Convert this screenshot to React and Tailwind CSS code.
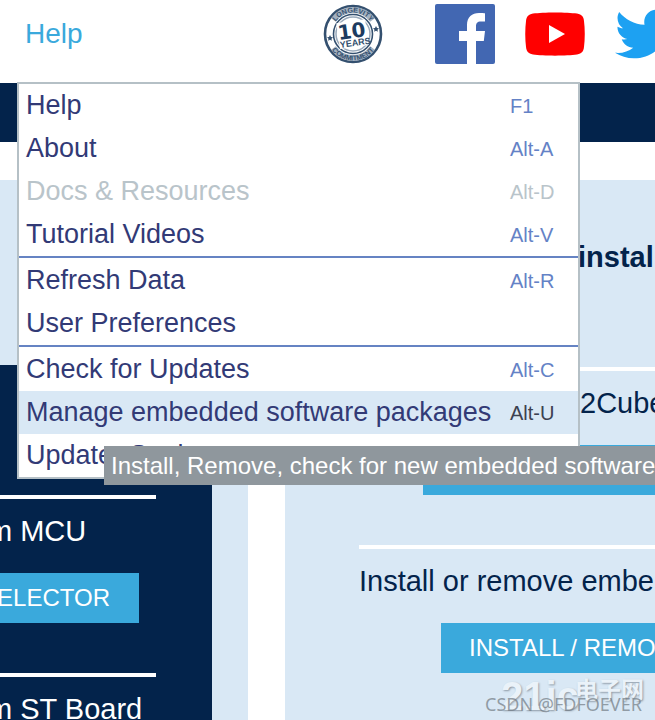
import React from "react";
import { FaTwitter } from "react-icons/fa";

const menuGroups = [
  [
    { label: "Help", shortcut: "F1" },
    { label: "About", shortcut: "Alt-A" },
    { label: "Docs & Resources", shortcut: "Alt-D", disabled: true },
    { label: "Tutorial Videos", shortcut: "Alt-V" },
  ],
  [
    { label: "Refresh Data", shortcut: "Alt-R" },
    { label: "User Preferences" },
  ],
  [
    { label: "Check for Updates", shortcut: "Alt-C" },
    { label: "Manage embedded software packages", shortcut: "Alt-U", active: true },
    { label: "Updater Settings" },
  ],
];

const itemColor = (item) => (item.disabled ? "text-[#b9c4ca]" : "text-[#323a76]");

const shortcutColor = (item) => {
  if (item.disabled) return "text-[#b9c4ca]";
  return item.active ? "text-[#3c4150]" : "text-[#6482c6]";
};

const LongevityBadge = () => (
  <svg className="w-[60px] h-[60px]" viewBox="0 0 60 60" aria-label="10 years longevity commitment">
    <defs>
      <path id="badge-top" d="M 8.500 30 A 21.500 21.500 0 0 1 51.500 30" />
      <path id="badge-bottom" d="M 3.500 30 A 26.500 26.500 0 0 0 56.500 30" />
    </defs>
    <g fill="none" stroke="#34506f">
      <circle cx="30" cy="30" r="28" strokeWidth="2.600" />
      <path d="M10.500 16A24 24 0 0 1 49.500 16M10.500 44A24 24 0 0 0 49.500 44" stroke="#a3b1c0" strokeWidth="6" />
      <circle cx="30" cy="30" r="19.500" strokeWidth="1.600" />
      <circle cx="30" cy="30" r="17" stroke="#9aaabb" strokeWidth="1.500" />
    </g>
    <g fill="#34506f" fontFamily="Liberation Sans, sans-serif" fontWeight="bold" textAnchor="middle">
      <text fontSize="7">
        <textPath href="#badge-top" startOffset="50%">LONGEVITY</textPath>
      </text>
      <text fontSize="7">
        <textPath href="#badge-bottom" startOffset="50%">COMMITMENT</textPath>
      </text>
      <path d="M7 31l1 2 2 .3-1.500 1.400.4 2.100-1.900-1-1.900 1 .4-2.100L4 33.300l2-.3z" />
      <path d="M53 22l1 2 2 .3-1.500 1.400.4 2.100-1.900-1-1.900 1 .4-2.100L50 24.300l2-.3z" />
      <g transform="rotate(-8 30 30)">
        <path d="M15 17h29v26H15z" fill="#fff" />
        <text x="29" y="34" fontFamily="DejaVu Sans, sans-serif" fontSize="20" fill="#1d3b60">10</text>
        <text x="31" y="42" fontSize="9">YEARS</text>
      </g>
    </g>
  </svg>
);

const FacebookLogo = () => (
  <svg className="w-[60px] h-[60px]" viewBox="0 0 60 60">
    <rect width="60" height="60" rx="2" fill="#4267b2" />
    <path
      d="M32 60V37h-8v-10h8v-6c0-8 5-12 12-12 3 0 5 .1 6 .3v8.200h-4c-4 0-5 2-5 5V27h9l-1.200 10H41v23z"
      fill="#fff"
    />
  </svg>
);

const YoutubeLogo = () => (
  <svg className="w-[60px] h-[44px]" viewBox="0 0 60 44">
    <path
      d="M8 1.500C18 0 42 0 52 1.500 57 2.300 58.500 5 59 9c1 8 1 18 0 26-.5 4-2 6.700-7 7.500-10 1.500-34 1.500-44 0C3 41.700 1.500 39 1 35 0 27 0 17 1 9c.5-4 2-6.700 7-7.500z"
      fill="#f00"
    />
    <path d="M24 13l16 9-16 9z" fill="#fff" />
  </svg>
);

const HelpMenu = () => (
  <div
    role="menu"
    className="absolute top-full left-[17px] z-10 w-[563px] -mt-px bg-white border-2 border-[#b5c0c6]"
  >
    {menuGroups.map((group, index) => (
      <div key={index}>
        {index > 0 && <hr className="h-0.5 border-0 bg-[#6583c3] mb-px" />}
        {group.map((item) => (
          <button
            key={item.label}
            role="menuitem"
            disabled={item.disabled}
            className={`flex w-full h-[43px] items-center pl-[7px] text-left text-[27px] ${itemColor(item)} ${
              item.active ? "bg-[#d9e8f5]" : ""
            }`}
          >
            <span className="grow whitespace-nowrap">{item.label}</span>
            {item.shortcut && (
              <span className={`w-[68px] shrink-0 text-xl ${shortcutColor(item)}`}>{item.shortcut}</span>
            )}
          </button>
        ))}
      </div>
    ))}
    <div
      role="tooltip"
      className="absolute left-[85px] bottom-[-8px] h-[39px] px-[7px] flex items-center bg-[#8f979d] text-white text-2xl whitespace-nowrap"
    >
      Install, Remove, check for new embedded software
    </div>
  </div>
);

const Header = () => (
  <header className="relative h-[83px] shrink-0 flex items-start bg-white">
    <button className="ml-[25px] mt-3 w-[298px] shrink-0 text-left text-[28px] leading-[44px] text-[#3aa9dc]">
      Help
    </button>
    <div className="flex items-center h-[68px] shrink-0">
      <LongevityBadge />
      <div className="flex items-center gap-[30px] ml-[52px]">
        <a href="#facebook" aria-label="Facebook">
          <FacebookLogo />
        </a>
        <a href="#youtube" aria-label="YouTube">
          <YoutubeLogo />
        </a>
        <a href="#twitter" aria-label="Twitter">
          <FaTwitter className="w-[60px] h-[60px] text-[#1da1f2]" />
        </a>
      </div>
    </div>
    <HelpMenu />
  </header>
);

const NewProject = () => (
  <aside className="w-[248px] shrink-0 flex bg-[#d9e8f5]">
    <div className="w-[212px] mt-[185px] pt-[130px] bg-[#03234b] text-white text-[29px] leading-9 whitespace-nowrap">
      <hr className="w-[156px] h-1 border-0 bg-white" />
      <p className="mt-3.5 -ml-3">m MCU</p>
      <button className="mt-6 w-[139px] h-[50px] pr-[29px] flex items-center justify-end bg-[#3aa9dc] text-2xl">
        ELECTOR
      </button>
      <hr className="mt-[50px] w-[156px] h-1 border-0 bg-white" />
      <p className="mt-3.5 -ml-3">m ST Board</p>
    </div>
  </aside>
);

const ManageSoftware = () => (
  <main className="ml-[37px] grow min-w-0 overflow-hidden pl-[74px] pt-[59px] bg-[#d9e8f5] text-[#03234b] text-[29px] leading-9 whitespace-nowrap">
    <h2 className="pl-[219px] font-bold">install</h2>
    <hr className="mt-[92px] h-1 border-0 bg-white" />
    <p className="mt-3.5 pl-[221px]">2Cube</p>
    <button className="mt-6 ml-16 block w-full h-[50px] bg-[#3aa9dc]" aria-label="Check for updates" />
    <hr className="mt-[50px] h-1 border-0 bg-white" />
    <p className="mt-3.5">Install or remove embe</p>
    <button className="mt-6 ml-[82px] h-[50px] px-7 flex items-center bg-[#3aa9dc] text-white text-2xl">
      INSTALL / REMO
    </button>
  </main>
);

const Watermark = () => (
  <div className="absolute right-0 bottom-0 w-[170px] h-[48px] pointer-events-none whitespace-nowrap">
    <div className="absolute left-4 bottom-1 flex items-start text-[#eaf2f9] [text-shadow:1px_1px_2px_#8e9aa6]">
      <span className="w-[74px] font-['Liberation_Sans',sans-serif] font-bold text-[40px] leading-10">21ic</span>
      <span className="font-['Noto_Sans_CJK_SC',sans-serif] font-bold text-[23px] leading-6">电子网</span>
    </div>
    <span className="absolute left-0 bottom-1 font-['Noto_Sans',sans-serif] text-lg leading-6 text-[#6f7881]/70">
      CSDN @FDFOEVER
    </span>
  </div>
);

const App = () => (
  <div className="relative h-screen flex flex-col overflow-hidden bg-white font-['Liberation_Sans',Arial,sans-serif]">
    <Header />
    <div className="h-[59px] shrink-0 bg-[#03234b]" />
    <div className="mt-[38px] grow min-h-0 flex">
      <NewProject />
      <ManageSoftware />
    </div>
    <Watermark />
  </div>
);

export default App;
